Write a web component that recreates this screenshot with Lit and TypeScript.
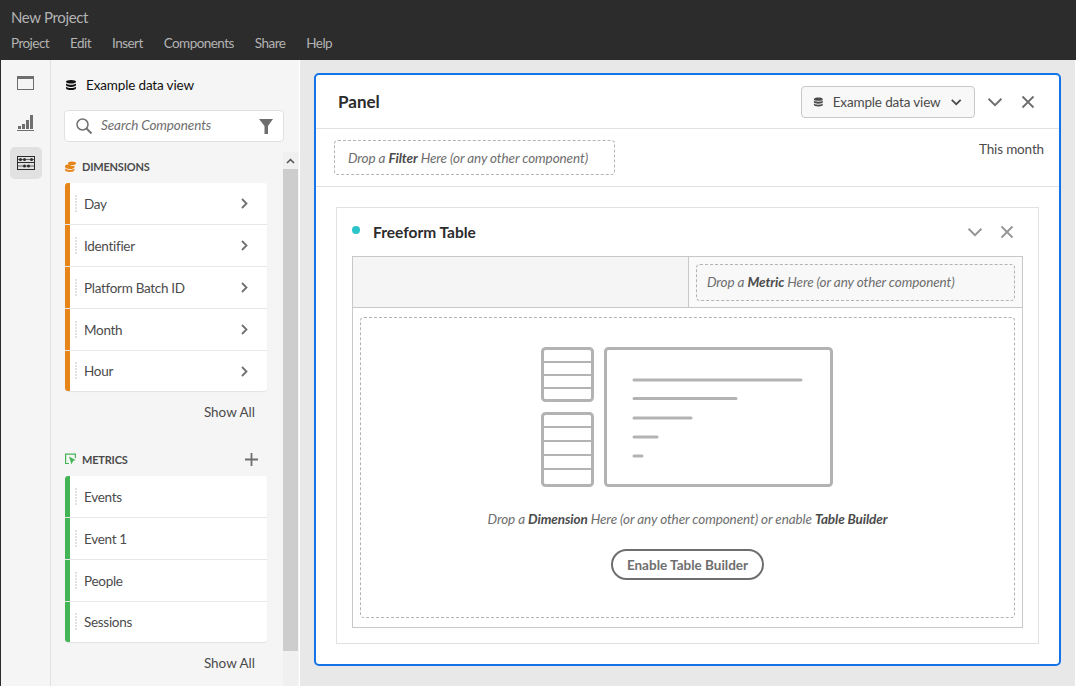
import { LitElement, html, css, svg } from 'lit';
import { customElement } from 'lit/decorators.js';

const dbIcon = (size: number) => html`<svg width=${size} height=${size} viewBox="0 0 12 12">
  <path fill="currentColor" d="M6 1C3 1 1 1.700 1 2.800S3 4.600 6 4.600s5-.7 5-1.800S9 1 6 1zM1 4.400v1.700c0 1.100 2 1.800 5 1.800s5-.7 5-1.800V4.400C10 5.300 8.200 5.700 6 5.700S2 5.300 1 4.400zM1 7.700v1.500C1 10.300 3 11 6 11s5-.7 5-1.800V7.700C10 8.600 8.200 9 6 9S2 8.600 1 7.700z"/>
</svg>`;

const chevronDown = (size: number, sw = 1.500) => html`<svg width=${size} height=${size} viewBox="0 0 14 14">
  <path d="M2 4.500l5 5 5-5" fill="none" stroke="currentColor" stroke-width=${sw}/>
</svg>`;

const closeIcon = (size: number) => html`<svg width=${size} height=${size} viewBox="0 0 14 14">
  <path d="M1.500 1.500l11 11M12.500 1.500l-11 11" fill="none" stroke="currentColor" stroke-width="1.800"/>
</svg>`;

const chevronRight = html`<svg width="7" height="11" viewBox="0 0 7 11">
  <path d="M1 1l4.500 4.500L1 10" fill="none" stroke="#707070" stroke-width="1.800"/>
</svg>`;

const illustration = svg`
  <g fill="none" stroke="#b3b3b3" stroke-width="3">
    <rect x="542.500" y="348.500" width="50" height="52" rx="3"/>
    <rect x="542.500" y="413.500" width="50" height="72" rx="3"/>
    <rect x="605.500" y="348.500" width="226" height="137" rx="3"/>
  </g>
  <g stroke="#b3b3b3" stroke-width="2">
    <path d="M542 362h50M542 375h50M542 388h50M542 427h50M542 441h50M542 455h50M542 469h50"/>
  </g>
  <g stroke="#b3b3b3" stroke-width="3" stroke-linecap="round">
    <path d="M634 380h167M634 398.500h102M634 418h57M634 437h23M634 456h8"/>
  </g>
`;

const DIMENSIONS = ['Day', 'Identifier', 'Platform Batch ID', 'Month', 'Hour'];
const METRICS = ['Events', 'Event 1', 'People', 'Sessions'];

@customElement('app-root')
export class AppRoot extends LitElement {
  static styles = css`
    :host {
      display: block;
      width: 1076px;
      height: 686px;
      overflow: hidden;
      font-family: 'Lato', 'Liberation Sans', sans-serif;
      font-size: 13.500px;
      letter-spacing: -0.300px;
      color: #4b4b4b;
    }
    .topbar {
      height: 60px;
      box-sizing: border-box;
      background: #2c2c2c;
      color: #b3b3b3;
      padding: 7px 11px 0;
    }
    .title {
      font-size: 15px;
      letter-spacing: -0.350px;
      line-height: 20px;
    }
    .menu {
      display: flex;
      gap: 21px;
      margin-top: 6px;
      line-height: 20px;
      letter-spacing: -0.550px;
    }
    .body {
      display: flex;
      height: 626px;
    }
    .rail {
      width: 51px;
      box-sizing: border-box;
      background: #f5f5f5;
      border-left: 1px solid #2c2c2c;
      border-right: 1px solid #e1e1e1;
      display: flex;
      flex-direction: column;
      align-items: center;
      padding-top: 7px;
      gap: 8px;
    }
    .rail-btn {
      width: 32px;
      height: 32px;
      border-radius: 5px;
      display: flex;
      align-items: center;
      justify-content: center;
      color: #6e6e6e;
    }
    .rail-btn.active {
      background: #e1e1e1;
      color: #2c2c2c;
    }
    .side {
      position: relative;
      width: 249px;
      box-sizing: border-box;
      background: #f5f5f5;
      border-right: 1px solid #fff;
      padding: 0 0 0 14px;
    }
    .side-title {
      display: flex;
      align-items: center;
      height: 50px;
      gap: 9px;
      color: #111;
      letter-spacing: -0.150px;
    }
    .side-title span {
      padding-bottom: 1px;
    }
    .search {
      display: flex;
      align-items: center;
      width: 220px;
      height: 32px;
      box-sizing: border-box;
      margin-left: -1px;
      background: #fff;
      border: 1px solid #e1e1e1;
      border-radius: 4px;
      padding: 0 10px;
      color: #6e6e6e;
      font-style: italic;
      letter-spacing: -0.100px;
    }
    .search span {
      flex: 1;
      margin-left: 8px;
      padding-bottom: 3px;
    }
    .group-head {
      display: flex;
      align-items: center;
      height: 16px;
      gap: 6px;
      font-size: 11px;
      font-weight: 700;
      letter-spacing: -0.200px;
      color: #4b4b4b;
    }
    .group-head.dims {
      margin-top: 16px;
    }
    .group-head.mets {
      margin-top: 29px;
      width: 202px;
    }
    .plus {
      margin-left: auto;
      margin-right: 9px;
      display: flex;
    }
    .list {
      width: 202px;
      margin-top: 9px;
      background: #fff;
      border-radius: 3px;
      overflow: hidden;
      box-shadow: 0 1px 1px rgba(0, 0, 0, 0.08);
    }
    .row {
      display: flex;
      align-items: center;
      height: 42px;
      box-sizing: border-box;
      border-bottom: 1px solid #e8e8e8;
    }
    .row:last-child {
      height: 40px;
      border-bottom: 0;
    }
    .bar {
      width: 5px;
      align-self: stretch;
    }
    .bar.orange {
      background: #e68619;
    }
    .bar.green {
      background: #44b556;
    }
    .grip {
      width: 2px;
      height: 18px;
      margin-left: 5px;
      background: repeating-linear-gradient(to bottom, #e1e1e1 0 2px, transparent 2px 3px);
    }
    .label {
      flex: 1;
      margin-left: 7px;
    }
    .row svg {
      margin-right: 19px;
    }
    .show-all {
      width: 190px;
      text-align: right;
      line-height: 20px;
      margin-top: 11px;
      letter-spacing: 0;
    }
    .scroll {
      position: absolute;
      left: 232px;
      top: 92px;
      bottom: 0;
      width: 15px;
      background: #f0f0f0;
    }
    .scroll-up {
      height: 17px;
      display: flex;
      align-items: center;
      justify-content: center;
      color: #505050;
    }
    .scroll-thumb {
      height: 482px;
      background: #cdcdcd;
    }
    .main {
      flex: 1;
      background: #e8e8e8;
      border-right: 1px solid #fff;
      padding: 13px 14px 0 14px;
      min-width: 0;
    }
    .panel {
      height: 593px;
      box-sizing: border-box;
      background: #fff;
      border: 2px solid #1473e6;
      border-radius: 5px;
      display: flex;
      flex-direction: column;
    }
    .panel-head {
      display: flex;
      align-items: center;
      height: 54px;
      flex: none;
      box-sizing: border-box;
      padding: 0 24px 0 22px;
      border-bottom: 1px solid #e1e1e1;
    }
    .panel-title {
      flex: 1;
      font-size: 17px;
      font-weight: 700;
      letter-spacing: 0;
      color: #2c2c2c;
    }
    .dv-btn {
      display: flex;
      align-items: center;
      width: 174px;
      height: 32px;
      box-sizing: border-box;
      padding: 0 12px 0 11px;
      gap: 9px;
      background: #f8f8f8;
      border: 1px solid #c8c8c8;
      border-radius: 4px;
      letter-spacing: -0.150px;
      white-space: nowrap;
    }
    .dv-btn span {
      flex: 1;
    }
    .icon-btn {
      display: flex;
      color: #6e6e6e;
    }
    .icon-btn.chev {
      margin-left: 11px;
    }
    .icon-btn.close {
      margin-left: 17px;
    }
    .filter-row {
      display: flex;
      height: 58px;
      flex: none;
      box-sizing: border-box;
      padding: 11px 15px 0 18px;
      border-bottom: 1px solid #e1e1e1;
    }
    .drop {
      box-sizing: border-box;
      display: flex;
      align-items: center;
      border: 1px dashed #b3b3b3;
      border-radius: 4px;
      font-style: italic;
      letter-spacing: -0.100px;
      color: #6e6e6e;
    }
    .drop b {
      color: #4b4b4b;
    }
    .filter-drop {
      width: 281px;
      height: 35px;
      padding-left: 13px;
    }
    .range {
      margin-left: auto;
      margin-top: -1px;
      line-height: 20px;
      letter-spacing: -0.150px;
    }
    .canvas {
      padding: 20px 20px 0 20px;
    }
    .card {
      height: 437px;
      box-sizing: border-box;
      border: 1px solid #e1e1e1;
      padding: 0 15px;
    }
    .card-head {
      display: flex;
      align-items: center;
      height: 48px;
    }
    .dot {
      width: 8px;
      height: 8px;
      margin-bottom: 4px;
      border-radius: 50%;
      background: #2bc4c9;
    }
    .card-title {
      flex: 1;
      margin-left: 13px;
      font-size: 15.500px;
      font-weight: 700;
      letter-spacing: 0;
      color: #2c2c2c;
    }
    .card-head .icon-btn {
      color: #959595;
    }
    .card-head .icon-btn.close {
      margin-left: 16px;
      margin-right: 9px;
    }
    .table {
      height: 372px;
      box-sizing: border-box;
      border: 1px solid #c8c8c8;
    }
    .thead {
      display: flex;
      height: 51px;
      box-sizing: border-box;
      border-bottom: 1px solid #c8c8c8;
    }
    .thead-left {
      width: 335px;
      background: #f5f5f5;
      border-right: 1px solid #c8c8c8;
    }
    .thead-right {
      flex: 1;
      padding: 7px 7px 0 7px;
      background: #fafafa;
    }
    .metric-drop {
      height: 37px;
      padding: 0 0 1px 10px;
      background: #f8f8f8;
    }
    .tbody {
      padding: 9px 7px 9px 7px;
    }
    .dim-drop {
      height: 301px;
      flex-direction: column;
      padding-top: 29px;
    }
    .dim-drop svg {
      display: block;
      margin-left: -2px;
    }
    .dim-text {
      margin-top: 22px;
      line-height: 20px;
    }
    .enable {
      margin-top: 20px;
      width: 153px;
      height: 31px;
      box-sizing: border-box;
      border: 2px solid #6e6e6e;
      border-radius: 16px;
      display: flex;
      align-items: center;
      justify-content: center;
      font-style: normal;
      font-weight: 700;
      letter-spacing: 0;
      color: #6e6e6e;
    }
  `;

  private renderRow(name: string, color: string, arrow: boolean) {
    return html`<div class="row">
      <div class="bar ${color}"></div>
      <div class="grip"></div>
      <div class="label">${name}</div>
      ${arrow ? chevronRight : ''}
    </div>`;
  }

  render() {
    return html`
      <div class="topbar">
        <div class="title">New Project</div>
        <div class="menu">
          ${['Project', 'Edit', 'Insert', 'Components', 'Share', 'Help'].map((m) => html`<span>${m}</span>`)}
        </div>
      </div>
      <div class="body">
        <div class="rail">
          <div class="rail-btn">
            <svg width="17" height="14" viewBox="0 0 17 14">
              <rect x=".5" y=".5" width="16" height="13" fill="none" stroke="currentColor"/>
              <rect x="0" y="0" width="17" height="3" fill="currentColor"/>
            </svg>
          </div>
          <div class="rail-btn">
            <svg width="17" height="16" viewBox="0 0 17 16">
              <path fill="currentColor" d="M1 11h3v3H1zM5 9h3v5H5zM9 5h3v9H9zM13 0h3v14h-3zM0 15h17v1H0z"/>
            </svg>
          </div>
          <div class="rail-btn active">
            <svg width="18" height="14" viewBox="0 0 18 14">
              <rect x=".5" y=".5" width="17" height="13" fill="none" stroke="currentColor"/>
              <path stroke="currentColor" d="M0 6.500h18"/>
              <path stroke="currentColor" stroke-width=".7" d="M1 3.500h16M1 10h16"/>
              <g fill="currentColor">
                <circle cx="3.500" cy="3.500" r="1.500"/><circle cx="7.500" cy="3.500" r="1.500"/><circle cx="14.500" cy="3.500" r="1.500"/>
                <circle cx="7.500" cy="10" r="1.500"/><circle cx="11.500" cy="10" r="1.500"/>
              </g>
            </svg>
          </div>
        </div>
        <div class="side">
          <div class="side-title">${dbIcon(12)}<span>Example data view</span></div>
          <div class="search">
            <svg width="18" height="18" viewBox="0 0 18 18">
              <circle cx="7.500" cy="7.500" r="5.500" fill="none" stroke="#707070" stroke-width="1.500"/>
              <path d="M11.500 11.500l5 5" stroke="#707070" stroke-width="1.800"/>
            </svg>
            <span>Search Components</span>
            <svg width="14" height="15" viewBox="0 0 14 15">
              <path fill="#6e6e6e" d="M0 0h14L9 7v8L5.500 15V7z"/>
            </svg>
          </div>
          <div class="group-head dims">
            <svg width="11" height="11" viewBox="0 0 11 11">
              <ellipse cx="7" cy="2.300" rx="4" ry="1.900" fill="#e68619"/>
              <path fill="#e68619" d="M0 5.300C0 4 2 3.300 4.300 3.300c.6 1.400 3 2 5.200 1.700v1c0 1.400-2.200 2-4.700 2S0 7.200 0 5.800zM0 7.600C1 8.600 3 9 4.800 9s3.700-.4 4.700-1.400V9c0 1.300-2.200 2-4.700 2S0 10.300 0 9z"/>
            </svg>
            DIMENSIONS
          </div>
          <div class="list">${DIMENSIONS.map((d) => this.renderRow(d, 'orange', true))}</div>
          <div class="show-all">Show All</div>
          <div class="group-head mets">
            <svg width="11" height="12" viewBox="0 0 11 12">
              <path fill="none" stroke="#44b556" stroke-width="1.200" d="M4 10.500H.6V1.100h9.800V5"/>
              <path fill="#44b556" d="M4 3.500l6.500 3.500-2.500 1-1.500 3.500z"/>
            </svg>
            METRICS
            <span class="plus">
              <svg width="13" height="13" viewBox="0 0 13 13">
                <path d="M6.500 0v13M0 6.500h13" stroke="#6e6e6e" stroke-width="1.800"/>
              </svg>
            </span>
          </div>
          <div class="list">${METRICS.map((m) => this.renderRow(m, 'green', false))}</div>
          <div class="show-all">Show All</div>
          <div class="scroll">
            <div class="scroll-up">
              <svg width="9" height="6" viewBox="0 0 9 6"><path d="M1 5l3.500-3.500L8 5" fill="none" stroke="currentColor" stroke-width="1.500"/></svg>
            </div>
            <div class="scroll-thumb"></div>
          </div>
        </div>
        <div class="main">
          <div class="panel">
            <div class="panel-head">
              <div class="panel-title">Panel</div>
              <div class="dv-btn">${dbIcon(12)}<span>Example data view</span>${chevronDown(14, 2)}</div>
              <div class="icon-btn chev">${chevronDown(18)}</div>
              <div class="icon-btn close">${closeIcon(14)}</div>
            </div>
            <div class="filter-row">
              <div class="drop filter-drop"><span>Drop a <b>Filter</b> Here (or any other component)</span></div>
              <div class="range">This month</div>
            </div>
            <div class="canvas">
              <div class="card">
                <div class="card-head">
                  <div class="dot"></div>
                  <div class="card-title">Freeform Table</div>
                  <div class="icon-btn">${chevronDown(18)}</div>
                  <div class="icon-btn close">${closeIcon(14)}</div>
                </div>
                <div class="table">
                  <div class="thead">
                    <div class="thead-left"></div>
                    <div class="thead-right">
                      <div class="drop metric-drop"><span>Drop a <b>Metric</b> Here (or any other component)</span></div>
                    </div>
                  </div>
                  <div class="tbody">
                    <div class="drop dim-drop">
                      <svg width="292" height="140" viewBox="541 347 292 140">${illustration}</svg>
                      <div class="dim-text">Drop a <b>Dimension</b> Here (or any other component) or enable <b>Table Builder</b></div>
                      <div class="enable">Enable Table Builder</div>
                    </div>
                  </div>
                </div>
              </div>
            </div>
          </div>
        </div>
      </div>
    `;
  }
}
